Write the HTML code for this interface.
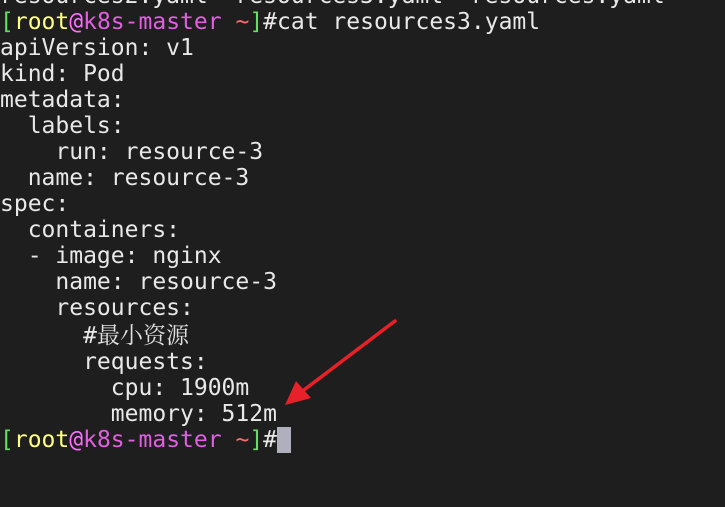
<!DOCTYPE html>
<html><head><meta charset="utf-8"><style>
html,body{margin:0;padding:0;background:#1e1e1e;width:725px;height:507px;overflow:hidden}
pre{margin:0;position:absolute;left:0;top:-17px;font-family:"DejaVu Sans Mono","Liberation Mono","Noto Sans CJK SC",monospace;font-size:23px;line-height:26px;color:#e8e8e8;white-space:pre}
.g{color:#5fe35f}.y{color:#ffff80}.p{color:#ff70ff}.m{color:#e060e0}.r{color:#ff6a6a}
.cur{display:inline-block;width:14px;height:26px;background:#b0afbe;vertical-align:top}
.cj{font-family:"Noto Serif CJK SC","Noto Sans CJK SC",serif;color:#e0e0e0}
svg{position:absolute;left:0;top:0}
</style></head><body>
<pre>resources2.yaml  resources3.yaml  resources.yaml
<span class="g">[</span><span class="y">root</span><span class="p">@</span><span class="m">k8s-master</span> <span class="r">~</span><span class="g">]</span>#cat resources3.yaml
apiVersion: v1
kind: Pod
metadata:
  labels:
    run: resource-3
  name: resource-3
spec:
  containers:
  - image: nginx
    name: resource-3
    resources:
      #<span class="cj">最小资源</span>
      requests:
        cpu: 1900m
        memory: 512m
<span class="g">[</span><span class="y">root</span><span class="p">@</span><span class="m">k8s-master</span> <span class="r">~</span><span class="g">]</span>#<span class="cur"></span></pre>
<svg width="725" height="507"><line x1="395" y1="321" x2="300" y2="393" stroke="#e8202a" stroke-width="3.5" stroke-linecap="round"/><polygon points="285,405 296,381 311,398" fill="#e8202a"/></svg>
</body></html>
